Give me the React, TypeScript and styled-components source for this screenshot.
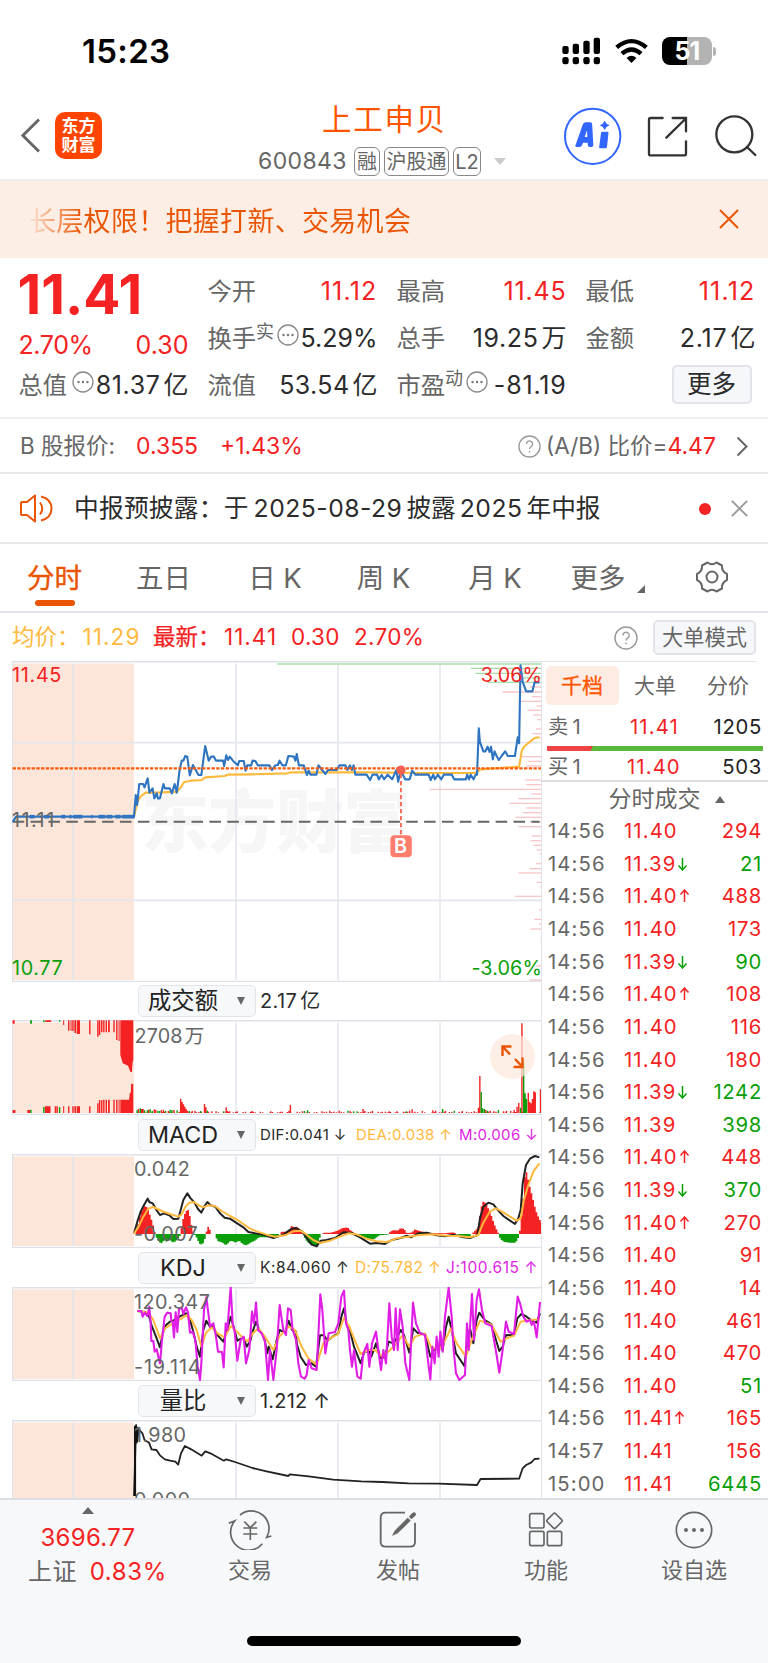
import React from "react";
import styled, { createGlobalStyle, css } from "styled-components";

const RED = "#f42222";
const GREEN = "#0a9f0a";
const ORANGE = "#ea5504";
const GREY = "#666";
const DARK = "#2b2b2b";
const YELLOW = "#ffb93c";
const MAGENTA = "#e01ee6";
const LINE = "#e3e4ea";

const Global = createGlobalStyle`
  * { box-sizing: border-box; }
  body { margin: 0; background: #fff; }
  svg { display: block; flex: none; }
`;

const Page = styled.div`
  width: 768px;
  height: 1663px;
  overflow: hidden;
  display: flex;
  flex-direction: column;
  background: #fff;
  color: ${DARK};
  font-family: Inter, "Noto Sans CJK SC", sans-serif;
  font-size: 24px;
  line-height: 1;
  white-space: nowrap;
`;

const T = styled.span<{ $c?: string; $s?: number; $ls?: number; $w?: number; $ml?: number }>`
  color: ${(p) => p.$c ?? "inherit"};
  font-size: ${(p) => (p.$s ? `${p.$s}px` : "inherit")};
  letter-spacing: ${(p) => p.$ls ?? 0}px;
  font-weight: ${(p) => p.$w ?? 400};
  margin-left: ${(p) => p.$ml ?? 0}px;
`;

/* ---------- status bar ---------- */
const StatusBar = styled.div`
  height: 90px;
  flex: none;
  display: flex;
  align-items: center;
  padding: 12px 52px 0 82px;
`;
const Clock = styled.div`
  font-size: 33px;
  font-weight: 600;
  color: #000;
  letter-spacing: 0.3px;
  flex: 1;
`;
const StatusIcons = styled.div`
  display: flex;
  align-items: center;
  gap: 14px;
`;
const Battery = styled.div`
  width: 50px;
  height: 28px;
  border-radius: 8px;
  background: linear-gradient(90deg, #000 51%, #b3b3b3 51%);
  color: #fff;
  font-size: 25px;
  font-weight: 700;
  letter-spacing: -1px;
  display: flex;
  align-items: center;
  justify-content: center;
`;
const BatteryWrap = styled.div`
  display: flex;
  align-items: center;
  gap: 1px;
  &::after {
    content: "";
    width: 3px;
    height: 9px;
    border-radius: 0 3px 3px 0;
    background: #b3b3b3;
  }
`;

/* ---------- header ---------- */
const Header = styled.header`
  height: 91px;
  flex: none;
  display: grid;
  grid-template-columns: 258px 306px 204px;
  border-bottom: 2px solid #efefef;
`;
const HeaderLeft = styled.div`
  display: flex;
  align-items: center;
  gap: 15px;
  padding: 2px 0 0 21px;
`;
const Logo = styled.div`
  width: 47px;
  height: 47px;
  border-radius: 10px;
  background: #ff4400;
  color: #fff;
  font-size: 17px;
  font-weight: 700;
  line-height: 18.5px;
  display: flex;
  flex-direction: column;
  align-items: center;
  justify-content: center;
`;
const TitleBlock = styled.div`
  display: flex;
  flex-direction: column;
  padding-top: 13px;
`;
const Title = styled.div`
  font-size: 29.5px;
  line-height: 32px;
  letter-spacing: 1.7px;
  color: #ff5500;
  padding-left: 64px;
`;
const CodeRow = styled.div`
  display: flex;
  align-items: center;
  height: 31px;
  margin-top: 11px;
  gap: 4px;
  color: ${GREY};
`;
const Code = styled.span`
  width: 92px;
  font-size: 23px;
  letter-spacing: 0.4px;
`;
const Tag = styled.span<{ $w: number }>`
  width: ${(p) => p.$w}px;
  height: 29px;
  border: 1.2px solid #888;
  border-radius: 6px;
  display: flex;
  align-items: center;
  justify-content: center;
  font-size: 20px;
`;
const Triangle = styled.i<{ $w: number; $h: number; $c: string; $up?: boolean; $ml?: number }>`
  width: 0;
  height: 0;
  margin-left: ${(p) => p.$ml ?? 0}px;
  border-left: ${(p) => p.$w / 2}px solid transparent;
  border-right: ${(p) => p.$w / 2}px solid transparent;
  ${(p) =>
    p.$up
      ? css`border-bottom: ${p.$h}px solid ${p.$c};`
      : css`border-top: ${p.$h}px solid ${p.$c};`}
`;
const HeaderRight = styled.div`
  display: flex;
  align-items: center;
  padding-top: 5px;
`;

/* ---------- banner ---------- */
const Banner = styled.div`
  height: 77px;
  flex: none;
  background: #fdeee5;
  display: flex;
  align-items: center;
  justify-content: space-between;
  padding: 4px 29px 0 29px;
  font-size: 27px;
  letter-spacing: 0.3px;
  svg {
    margin-bottom: 6px;
  }
`;
const BannerText = styled.span`
  color: transparent;
  background: linear-gradient(90deg, rgba(234, 85, 4, 0.05) 0, ${ORANGE} 52px);
  background-clip: text;
  line-height: 40px;
`;

/* ---------- quote ---------- */
const Quote = styled.section`
  height: 161px;
  flex: none;
  display: grid;
  grid-template-columns: repeat(4, 170px);
  column-gap: 19px;
  padding: 0 0 0 18.5px;
  border-bottom: 2px solid #efefef;
`;
const QuoteCol = styled.div`
  display: flex;
  flex-direction: column;
  padding-top: 10px;
`;
const QuoteRow = styled.div<{ $c?: string; $h?: number }>`
  height: ${(p) => p.$h ?? 47}px;
  display: flex;
  align-items: center;
  justify-content: space-between;
  color: ${(p) => p.$c ?? DARK};
  font-size: 25px;
`;
const Label = styled.span`
  color: ${GREY};
  font-size: 24.3px;
  display: inline-flex;
  align-items: center;
`;
const Sup = styled.sup`
  font-size: 18px;
  line-height: 18px;
  margin-bottom: 14px;
  vertical-align: baseline;
`;
const BigPrice = styled.div`
  height: 66px;
  padding-top: 0;
  margin-left: -1px;
  font-size: 55px;
  line-height: 53px;
  font-weight: 700;
  letter-spacing: 0;
  color: ${RED};
`;
const MoreButton = styled.button`
  margin: 0 4px 3px auto;
  width: 80px;
  height: 39px;
  border: 2px solid #e2e4ea;
  border-radius: 5px;
  background: #f6f7fa;
  color: ${DARK};
  font: inherit;
  font-size: 24.5px;
  padding: 0;
`;

/* ---------- information rows ---------- */
const InfoRow = styled.div<{ $h: number }>`
  height: ${(p) => p.$h}px;
  flex: none;
  display: flex;
  align-items: center;
  padding: 1px 20px 0 20px;
  border-bottom: 2px solid #e9e9ec;
`;
const Spacer = styled.div`
  flex: 1;
`;
const Dot = styled.i`
  width: 12px;
  height: 12px;
  border-radius: 50%;
  background: ${RED};
  margin-right: 20px;
`;

/* ---------- period tabs ---------- */
const Tabs = styled.nav`
  height: 69px;
  flex: none;
  display: flex;
  border-bottom: 2px solid ${LINE};
  & > svg {
    margin: 16px 0 0 35px;
  }
`;
const Tab = styled.div<{ $w: number; $active?: boolean }>`
  width: ${(p) => p.$w}px;
  display: flex;
  flex-direction: column;
  align-items: center;
  justify-content: space-between;
  padding: 18px 0 5px;
  font-size: 27.5px;
  line-height: 32px;
  color: ${(p) => (p.$active ? ORANGE : GREY)};
  -webkit-text-stroke: ${(p) => (p.$active ? 0.4 : 0)}px ${ORANGE};
  &::after {
    content: "";
    width: 40px;
    height: 6px;
    border-radius: 3px;
    background: ${(p) => (p.$active ? ORANGE : "transparent")};
  }
`;
const TabMore = styled.span`
  display: flex;
  align-items: flex-end;
  gap: 11px;
  &::after {
    content: "";
    border-left: 8px solid transparent;
    border-bottom: 8px solid ${GREY};
    margin-bottom: 1px;
  }
`;

const AvgRow = styled.div`
  height: 48px;
  flex: none;
  display: flex;
  align-items: center;
  padding: 1px 12px 0 12px;
  font-size: 22.5px;
  color: ${RED};
`;
const Cell = styled.span<{ $w: number; $c?: string; $ls?: number; $s?: number; $bold?: boolean }>`
  width: ${(p) => p.$w}px;
  color: ${(p) => p.$c ?? "inherit"};
  letter-spacing: ${(p) => p.$ls ?? 0}px;
  ${(p) => p.$s && `font-size: ${p.$s}px;`}
  ${(p) => p.$bold && `-webkit-text-stroke: 0.25px ${RED};`}
`;
const ModeButton = styled.button`
  width: 103px;
  height: 35px;
  margin-left: 15px;
  border: 2px solid #e2e4ea;
  border-radius: 5px;
  background: #f6f7fa;
  color: ${GREY};
  font: inherit;
  font-size: 21.2px;
  padding: 0;
`;

/* ---------- charts + order book ---------- */
const Body = styled.main`
  flex: none;
  height: 837px;
  display: grid;
  grid-template-columns: 542px 226px;
  overflow: hidden;
`;
const Charts = styled.div`
  padding-left: 12px;
`;
const Panel = styled.div<{ $h: number }>`
  position: relative;
  height: ${(p) => p.$h}px;
  overflow: hidden;
  border-right: 1.5px solid ${LINE};
`;
const ChartLabel = styled.span<{ $top: number; $left?: number; $right?: number; $c?: string; $ls?: number }>`
  position: absolute;
  top: ${(p) => p.$top}px;
  ${(p) => (p.$right !== undefined ? `right: ${p.$right}px;` : `left: ${p.$left ?? 0}px;`)}
  color: ${(p) => p.$c ?? GREY};
  font-size: 19.8px;
  line-height: 20px;
  letter-spacing: ${(p) => p.$ls ?? 0.35}px;
`;
const IndicatorRow = styled.div<{ $h: number }>`
  height: ${(p) => p.$h}px;
  display: flex;
  align-items: center;
  padding-left: 126px;
  border-right: 1.5px solid ${LINE};
`;
const Select = styled.div`
  width: 118px;
  height: 32px;
  flex: none;
  display: flex;
  align-items: center;
  justify-content: space-between;
  padding: 0 10px 0 0;
  border: 1.5px solid #e2e4ea;
  border-radius: 5px;
  background: #f7f8fa;
  font-size: 23.3px;
  color: #222;
  margin-right: 4px;
`;
const SelectText = styled.span`
  width: 88px;
  text-align: center;
`;
const ExpandButton = styled.button`
  position: absolute;
  left: 478px;
  top: 14px;
  width: 45px;
  height: 45px;
  padding: 0;
  border: 0;
  border-radius: 50%;
  background: rgba(253, 232, 220, 0.7);
`;
const Book = styled.aside`
  display: flex;
  flex-direction: column;
`;
const BookTabs = styled.div`
  height: 47px;
  flex: none;
  display: flex;
  border-top: 1.5px solid ${LINE};
  margin-right: 12px;
  padding: 4px 0 0 3.5px;
`;
const BookTab = styled.div<{ $active?: boolean }>`
  width: 73px;
  height: 39px;
  flex: none;
  border-radius: 5px;
  display: flex;
  align-items: center;
  justify-content: center;
  font-size: 21px;
  background: ${(p) => (p.$active ? "#fdece3" : "transparent")};
  color: ${(p) => (p.$active ? "#ff5500" : GREY)};
  -webkit-text-stroke: ${(p) => (p.$active ? 0.3 : 0)}px #ff5500;
`;
const Row = styled.div<{ $h: number; $pt?: number }>`
  height: ${(p) => p.$h}px;
  flex: none;
  display: grid;
  grid-template-columns: 76px 70px 1fr;
  align-items: center;
  padding: ${(p) => p.$pt ?? 0}px 6px 0 6px;
  font-size: 20.3px;
  letter-spacing: 1.1px;
  color: ${GREY};
`;
const Num = styled.span<{ $c?: string }>`
  text-align: right;
  letter-spacing: 0.7px;
  color: ${(p) => p.$c ?? "#222"};
`;
const Price = styled.span`
  color: ${RED};
`;
const Arrow = styled.span<{ $c: string }>`
  display: inline-block;
  margin-left: 1px;
  color: ${(p) => p.$c};
`;
const RatioBar = styled.div`
  height: 5px;
  flex: none;
  margin: 0 5px 0 5px;
  background: linear-gradient(115deg, #ef4444 21%, #58b93c 21%);
`;
const TradesHead = styled.div`
  height: 35px;
  flex: none;
  display: flex;
  align-items: center;
  justify-content: center;
  gap: 14px;
  border-top: 2px solid #dcdde4;
  font-size: 23px;
  color: ${GREY};
  padding: 2px 0 0 23px;
`;

/* ---------- bottom bar ---------- */
const Bottom = styled.footer`
  flex: 1;
  background: #f7f8fa;
  border-top: 2px solid #dedfe4;
  display: flex;
  flex-direction: column;
  align-items: center;
  color: ${GREY};
`;
const Nav = styled.div`
  width: 768px;
  height: 136px;
  display: grid;
  grid-template-columns: 176px repeat(4, 148px);
`;
const IndexBox = styled.div`
  display: flex;
  flex-direction: column;
  align-items: center;
  padding-top: 7px;
  color: ${RED};
  font-size: 24px;
`;
const IndexValue = styled.div`
  margin-top: 12px;
  letter-spacing: 0.3px;
`;
const IndexChange = styled.div`
  margin: 10px 0 0 19px;
  display: flex;
  gap: 13px;
`;
const NavItem = styled.div`
  display: flex;
  flex-direction: column;
  align-items: center;
  padding-top: 10px;
  font-size: 22px;
  gap: 9px;
`;
const HomeBar = styled.div`
  width: 274px;
  height: 10px;
  border-radius: 5px;
  background: #000;
`;

/* ---------- small drawings ---------- */
const DotsIcon = styled.svg<{ $ml: number }>`
  margin: 0 0 8px ${(p) => p.$ml}px;
`;
const Dots = ({ ml = 2.5 }: { ml?: number }) => (
  <DotsIcon $ml={ml} width="22" height="22" viewBox="0 0 22 22">
    <circle cx="11" cy="11" r="10" fill="none" stroke="#888" strokeWidth="1.3" />
    {[6.5, 11, 15.5].map((x) => (
      <circle key={x} cx={x} cy="11" r="1.2" fill="#777" />
    ))}
  </DotsIcon>
);
const Help = ({ size = 23 }: { size?: number }) => (
  <svg width={size} height={size} viewBox="0 0 24 24" fill="none" stroke="#999" strokeWidth="1.4">
    <circle cx="12" cy="12" r="11" />
    <path d="M8.8 9.4a3.2 3.2 0 1 1 4.8 2.8c-1.1.7-1.6 1.2-1.6 2.4" />
    <path d="M12 16.6v1.7" />
  </svg>
);
const Cross = ({ size, color, w }: { size: number; color: string; w: number }) => (
  <svg width={size} height={size} viewBox="0 0 20 20" stroke={color} strokeWidth={w}>
    <path d="M1 1 19 19M19 1 1 19" />
  </svg>
);
const Value = ({ n, unit, ls = 0.5 }: { n: string; unit?: string; ls?: number }) => (
  <span>
    <T $ls={ls}>{n}</T>
    {unit && <T $ml={3}>{unit}</T>}
  </span>
);

/* ---------- chart data ---------- */
const PRICE =
  "36,516 46,500 382,500 387,435 391,465 397,402 408,402 412,412 421,385 426,428 435,415 440,445 447,430 450,445 456,445 466,402 470,415 484,415 490,430 498,402 504,428 512,360 518,332 523,332 528,318 534,320 541,376 550,345 566,375 574,375 585,288 595,332 602,320 610,320 616,332 636,332 639,348 645,316 650,330 655,320 664,332 678,346 682,333 695,333 700,362 705,346 716,346 720,332 728,333 735,346 768,346 775,360 785,346 792,345 797,332 805,346 815,346 822,318 838,320 842,332 846,312 852,346 866,346 875,375 880,362 885,374 902,374 908,346 918,360 928,372 935,360 960,360 968,346 985,346 990,360 998,346 1003,360 1008,346 1013,374 1045,374 1055,390 1062,374 1075,374 1080,388 1088,375 1095,388 1105,374 1118,388 1130,360 1135,395 1143,362 1155,388 1168,388 1175,362 1184,374 1222,374 1228,390 1235,374 1240,388 1248,374 1258,388 1265,374 1288,374 1295,388 1328,388 1332,374 1337,388 1342,374 1350,388 1356,374 1360,374 1365,235 1368,275 1378,304 1384,304 1390,290 1396,306 1400,290 1405,328 1410,304 1416,318 1422,330 1430,318 1440,304 1448,318 1468,318 1476,262 1480,280 1484,46 1490,95 1500,124 1518,124 1524,97 1538,97";
const AVG =
  "382,500 392,455 402,438 415,428 450,428 505,425 515,412 525,396 545,392 575,390 585,382 640,378 650,374 720,373 820,370 830,367 1060,367 1200,369 1355,369 1370,358 1480,350 1488,300 1496,288 1515,272 1524,264 1538,262";
const ASKS = [[42, 790], [55, 1342], [70, 1355], [84, 1480], [97, 1390]];
const BIDS = [
  [111, 1510], [126, 1433], [140, 1516], [154, 1478], [168, 1530], [181, 1504], [195, 1520], [209, 1532], [237, 1528],
  [251, 1518], [265, 1540], [320, 1485], [334, 1505], [348, 1500], [390, 1498], [404, 1500], [418, 1225], [432, 1515],
  [446, 1478], [460, 1452], [474, 1500], [488, 1490], [502, 1470], [516, 1510], [530, 1478], [558, 1516], [572, 1512],
  [586, 1520], [600, 1530], [612, 1539], [641, 1528], [656, 1510], [669, 1478], [683, 1540], [697, 1530], [711, 1540],
  [739, 1468], [780, 1538], [808, 1523], [822, 1538], [837, 1512], [865, 1541], [878, 1541], [948, 1527], [990, 1510],
];
const OPEN_TICKS = [[85, 98], [126, 140], [175, 186], [198, 204], [209, 235], [260, 264], [281, 300], [304, 320], [329, 344], [348, 384]];

const DIF =
  "12,250 22,215 32,185 42,165 53,146 58,156 68,160 78,178 90,195 102,190 118,196 130,207 145,206 152,180 160,150 172,130 182,145 193,157 204,177 214,188 224,168 232,156 242,166 256,170 270,190 284,203 300,206 318,218 340,232 355,246 375,250 400,254 430,264 460,254 482,238 498,234 516,244 530,264 545,284 560,289 572,272 590,270 615,264 640,247 665,249 690,262 720,281 740,279 765,282 785,270 812,264 830,257 843,262 865,250 890,248 920,256 945,259 970,254 1000,262 1020,264 1042,255 1050,205 1060,170 1075,158 1090,163 1105,182 1120,198 1140,212 1155,222 1165,205 1172,180 1178,100 1188,45 1200,26 1215,18 1228,22";
const DEA =
  "12,250 25,232 40,200 55,176 70,171 95,183 120,192 145,200 155,193 165,172 178,158 192,156 205,165 218,172 235,166 255,168 275,183 300,198 320,208 340,222 360,236 380,244 410,254 435,260 465,256 490,244 512,242 530,254 550,270 570,279 600,272 630,260 655,250 680,253 710,266 740,274 770,276 800,265 835,260 870,255 910,253 950,257 985,258 1020,262 1045,255 1060,218 1080,184 1098,175 1115,184 1140,200 1160,212 1172,205 1182,150 1195,105 1210,65 1228,40";
const HIST: number[][] = [
  [12, 0], [20, -20], [30, -65], [40, -84], [50, -80], [58, -55], [66, -30], [72, -5], [76, 10], [90, 30], [100, 18],
  [108, 24], [115, 16], [125, 25], [135, 22], [145, 10], [150, 0], [152, -20], [158, -50], [165, -68], [172, -72],
  [178, -50], [184, -15], [190, 0], [196, 8], [205, 28], [215, 33], [222, 15], [226, 0], [228, -15], [233, -23],
  [238, -10], [242, 0], [252, 0], [254, 8], [262, 22], [275, 26], [285, 34], [300, 20], [315, 26], [325, 20], [335, 30],
  [347, 34], [360, 26], [372, 20], [385, 10], [410, 10], [440, 6], [448, 0], [450, -6], [475, -8], [482, -24],
  [490, -20], [500, -22], [508, -10], [518, 0], [520, 8], [530, 25], [545, 34], [560, 35], [568, 8], [572, 0],
  [580, -4], [600, -4], [620, -10], [635, -18], [650, -20], [660, -10], [675, 0], [685, 8], [710, 16], [730, 16],
  [745, 4], [770, 2], [775, 0], [778, -8], [790, -12], [800, -10], [810, -18], [820, -15], [828, -2], [845, -5],
  [850, -14], [870, -8], [900, -3], [940, -2], [965, -5], [980, 0], [985, 6], [1015, 8], [1022, 0], [1035, -12],
  [1042, -20], [1048, -60], [1054, -95], [1060, -98], [1070, -82], [1080, -60], [1090, -30], [1098, -12], [1104, 0],
  [1108, 15], [1120, 24], [1135, 26], [1155, 26], [1162, 12], [1165, 0], [1167, -10], [1175, -80], [1182, -170],
  [1187, -185], [1195, -150], [1205, -110], [1215, -70], [1225, -45], [1236, -28],
];
const histPath = (sign: number) => {
  let d = "";
  for (let x = 12; x < 1236; x += 5) {
    const i = Math.max(1, HIST.findIndex((p) => p[0] >= x));
    const [x0, y0] = HIST[i - 1];
    const [x1, y1] = HIST[i];
    const h = y0 + ((y1 - y0) * (x - x0)) / (x1 - x0 || 1);
    if (h * sign > 1) d += `M${x} 252v${h.toFixed(1)}h5v${(-h).toFixed(1)}z`;
  }
  return d;
};
const J =
  "22,483 34,483 38,500 44,488 52,498 58,470 62,520 64,573 70,573 74,605 80,598 86,625 90,640 96,570 104,500 112,488 122,490 124,512 128,514 132,562 137,487 142,546 147,475 156,475 160,492 168,472 174,487 180,548 188,545 196,570 203,650 210,690 214,640 222,480 229,442 240,530 250,520 258,560 264,605 276,606 281,652 287,520 292,540 302,412 308,520 314,545 322,632 332,570 341,560 348,640 358,600 366,485 372,520 378,458 384,540 395,550 405,575 414,690 420,600 430,690 440,600 449,465 460,540 468,555 474,475 482,480 488,540 498,570 505,640 513,680 524,686 530,675 536,630 545,655 560,660 571,433 577,480 586,610 596,550 615,546 625,520 634,440 642,422 648,520 655,540 660,600 666,650 672,600 682,680 692,686 700,610 712,582 718,650 726,580 738,545 745,600 753,660 760,600 768,640 778,460 785,560 792,600 797,475 803,600 810,478 818,530 826,640 838,690 849,458 858,520 870,550 885,555 895,640 901,688 907,590 914,640 920,560 926,620 931,545 938,605 945,500 956,412 965,500 971,600 978,670 988,690 1005,675 1011,520 1016,600 1026,432 1032,570 1040,450 1047,418 1056,480 1066,520 1085,528 1092,570 1099,610 1108,668 1118,600 1128,515 1136,545 1152,552 1163,440 1170,460 1180,500 1190,515 1200,510 1205,525 1212,515 1220,562 1230,456";
const K =
  "22,483 45,486 56,495 66,530 78,560 90,592 98,550 108,525 120,515 130,512 148,500 168,490 180,510 190,545 200,590 210,620 220,540 229,512 240,530 250,532 262,555 280,575 290,545 302,500 312,535 322,572 340,562 350,590 360,575 368,545 378,515 388,540 402,560 412,610 416,590 428,628 440,570 449,540 465,548 476,512 486,540 498,545 500,580 512,620 528,645 545,640 558,650 570,556 582,556 592,572 615,555 625,550 634,500 642,475 650,520 662,550 672,590 692,640 702,608 716,602 724,620 738,580 752,625 765,620 776,575 790,580 800,565 812,540 822,555 838,608 850,535 862,548 885,553 901,620 912,600 930,585 938,600 948,530 956,500 965,540 978,610 1003,648 1014,560 1020,535 1030,580 1040,510 1048,488 1064,510 1084,522 1095,560 1108,603 1118,590 1128,555 1152,556 1162,505 1174,492 1190,500 1205,512 1220,518 1230,490";
const D =
  "22,483 55,488 70,510 90,565 105,535 125,522 150,508 170,495 185,510 200,540 214,590 228,548 245,532 265,552 284,562 302,528 318,542 335,560 352,574 370,548 385,535 405,560 430,600 448,560 476,530 495,540 515,590 535,625 560,644 580,580 600,565 624,552 642,503 658,530 672,565 692,612 715,600 735,600 755,618 775,605 800,580 818,555 838,590 855,560 885,550 905,595 930,595 945,572 962,535 980,580 1008,620 1025,570 1050,512 1085,524 1112,575 1130,565 1152,557 1172,515 1200,510 1230,508";
const RATIO =
  "382,768 388,555 390,608 396,568 406,580 412,600 425,608 432,628 446,630 456,646 470,658 485,662 500,665 508,674 516,640 527,618 545,628 575,647 585,634 600,640 638,662 645,658 670,666 720,684 760,694 822,708 826,703 880,709 950,719 1030,724 1090,726 1165,730 1250,731 1360,735 1370,717 1480,716 1490,685 1500,675 1515,667 1524,657 1538,656";

/* opening auction bars: x, width, end of the upper bar, start of the lower bar */
const AUCTION: number[][] = [
  [36, 6, 146, 405], [180, 3, 150, 394], [194, 4, 167, 394], [201, 3, 167, 414], [206, 4, 168, 394], [212, 5, 174, 394],
  [219, 9, 177, 394], [254, 4, 178, 394], [277, 4, 185, 385], [282, 4, 180, 375], [288, 4, 172, 376], [294, 4, 172, 374],
  [301, 4, 172, 374], [308, 5, 172, 374], [323, 4, 172, 374], [331, 4, 195, 374], [338, 3, 198, 374],
];
const VOL_RED: number[][] = [
  [42, 405], [80, 405], [84, 405], [130, 394], [134, 394], [138, 394], [142, 394], [158, 394], [163, 394], [395, 402],
  [404, 402], [408, 402], [424, 404], [440, 403], [444, 405], [460, 405], [466, 404], [480, 408], [496, 405], [515, 371],
  [519, 381], [523, 388], [527, 395], [531, 403], [535, 407], [548, 408], [556, 407], [583, 387], [587, 397], [604, 409],
  [616, 409], [645, 397], [649, 408], [655, 409], [676, 409], [718, 408], [722, 410], [772, 409], [800, 410], [824, 407],
  [828, 390], [862, 409], [918, 409], [940, 407], [967, 407], [998, 408], [1035, 402], [1040, 408], [1062, 408],
  [1090, 410], [1110, 409], [1132, 409], [1150, 410], [1168, 407], [1175, 403], [1204, 408], [1234, 406], [1242, 407],
  [1270, 408], [1318, 408], [1352, 409], [1364, 398], [1368, 303], [1385, 405], [1398, 407], [1408, 409], [1436, 409],
  [1444, 407], [1456, 408], [1466, 405], [1474, 395], [1479, 384], [1488, 145], [1506, 353], [1510, 380], [1514, 385],
  [1518, 372], [1522, 349], [1526, 352], [1541, 343],
];
const VOL_GREEN: number[][] = [
  [88, 404], [125, 396], [170, 397], [391, 405], [400, 400], [412, 406], [420, 406], [428, 403], [434, 407], [450, 407],
  [455, 408], [472, 408], [485, 404], [490, 405], [505, 406], [540, 408], [572, 408], [591, 407], [638, 409], [868, 408],
  [877, 406], [992, 407], [1008, 409], [1018, 409], [1158, 409], [1262, 402], [1295, 407], [1372, 351], [1376, 400],
  [1381, 402], [1390, 407], [1421, 405], [1484, 398], [1493, 262], [1497, 355], [1501, 372],
];
const bars = (list: number[][]) => list.map(([x, y]) => `M${x - 2} 414V${y}h4V414z`).join("");
const baseline = () => {
  let d = "";
  for (let x = 390; x < 1540; x += 7) if ((x * 31) % 11 < 7) d += `M${x} 414v-${2 + ((x * 13) % 3)}h4V414z`;
  return d;
};

type PlotProps = {
  h: number;
  box: [number, number, number, number];
  backdrop?: React.ReactNode;
  children: React.ReactNode;
};

/* Shared frame: opening auction shade, vertical grid lines and borders */
const Plot = ({ h, box, backdrop, children }: PlotProps) => (
  <svg width="530" height={h} viewBox={`0 0 530 ${h}`}>
    {backdrop}
    <rect x="0.5" y="2.5" width="121.5" height={h - 4.5} fill="#fce6da" />
    {[61, 224, 326, 428].map((x) => (
      <path key={x} d={`M${x} 2.5V${h - 2}`} stroke="#e1e4ea" strokeWidth="1.5" />
    ))}
    <path d="M0 .8H530" stroke="#dfe1e8" strokeWidth="1.6" />
    <path d={`M.5 0V${h}M0 ${h - 0.7}H530`} stroke="#dfe1e8" strokeWidth="1.2" fill="none" />
    <svg width="530" height={h} viewBox={box.join(" ")} preserveAspectRatio="none">
      {children}
    </svg>
  </svg>
);
const Line = ({ p, c, w = 2 }: { p: string; c: string; w?: number }) => (
  <polyline points={p} fill="none" stroke={c} strokeWidth={w} vectorEffect="non-scaling-stroke" strokeLinejoin="round" />
);

const Indicator = ({ name, h, children }: { name: string; h: number; children: React.ReactNode }) => (
  <IndicatorRow $h={h}>
    <Select>
      <SelectText>{name}</SelectText>
      <Triangle $w={9} $h={8} $c={GREY} />
    </Select>
    {children}
  </IndicatorRow>
);

const TRADES: [string, string, string, number, string][] = [
  ["14:56", "11.40", "", 294, RED],
  ["14:56", "11.39", "↓", 21, GREEN],
  ["14:56", "11.40", "↑", 488, RED],
  ["14:56", "11.40", "", 173, RED],
  ["14:56", "11.39", "↓", 90, GREEN],
  ["14:56", "11.40", "↑", 108, RED],
  ["14:56", "11.40", "", 116, RED],
  ["14:56", "11.40", "", 180, RED],
  ["14:56", "11.39", "↓", 1242, GREEN],
  ["14:56", "11.39", "", 398, GREEN],
  ["14:56", "11.40", "↑", 448, RED],
  ["14:56", "11.39", "↓", 370, GREEN],
  ["14:56", "11.40", "↑", 270, RED],
  ["14:56", "11.40", "", 91, RED],
  ["14:56", "11.40", "", 14, RED],
  ["14:56", "11.40", "", 461, RED],
  ["14:56", "11.40", "", 470, RED],
  ["14:56", "11.40", "", 51, GREEN],
  ["14:56", "11.41", "↑", 165, RED],
  ["14:57", "11.41", "", 156, RED],
  ["15:00", "11.41", "", 6445, GREEN],
];

export default function App() {
  return (
    <Page>
      <Global />
      <StatusBar>
        <Clock>15:23</Clock>
        <StatusIcons>
          <svg width="39" height="28" viewBox="65 52 117 82" fill="#000">
            {[[66, 78], [97, 71], [129, 62], [160, 53]].map(([x, y]) => (
              <g key={x}>
                <rect x={x} y={y} width="19" height={102 - y} rx="6" />
                <rect x={x} y="111" width="19" height="22" rx="7" />
              </g>
            ))}
          </svg>
          <svg width="33" height="26" viewBox="223 54 100 78" fill="none" stroke="#000" strokeWidth="13">
            <path d="M228 82q45-38 90 0" />
            <path d="M244 101q29-25 58 0" />
            <path d="M273 129l-15-15q15-13 30 0z" fill="#000" stroke="none" />
          </svg>
          <BatteryWrap>
            <Battery>51</Battery>
          </BatteryWrap>
        </StatusIcons>
      </StatusBar>

      <Header>
        <HeaderLeft>
          <svg width="19" height="35" viewBox="0 0 19 35" fill="none" stroke={GREY} strokeWidth="3">
            <path d="M18 1.5 1.8 17.5 18 33.5" />
          </svg>
          <Logo>
            <span>东方</span>
            <span>财富</span>
          </Logo>
        </HeaderLeft>
        <TitleBlock>
          <Title>上工申贝</Title>
          <CodeRow>
            <Code>600843</Code>
            <Tag $w={26}>融</Tag>
            <Tag $w={65}>沪股通</Tag>
            <Tag $w={28}>L2</Tag>
            <Triangle $w={13} $h={7} $c="#ccc" $ml={9} />
          </CodeRow>
        </TitleBlock>
        <HeaderRight>
          <svg width="204" height="60" viewBox="72 260 612 180" fill="none" strokeLinecap="round">
            <circle cx="158" cy="348" r="83" stroke="#3366ff" strokeWidth="6" />
            <path
              d="M106 376 128 313Q131 306 138 306H150Q156 306 156.5 312L160 374Q160 380 154 380H149Q144 380 143.5 375L143 367H129L126 375Q124 380 119 380H109Q105 380 106 376ZM141 330 134 350H142Z"
              fill="#3366ff"
              fillRule="evenodd"
            />
            <path
              d="M188 334H202Q206 334 205.5 338L201 379Q200 384 195 384H181Q177 384 177.5 380L183 338Q183.5 334 188 334Z"
              fill="#3366ff"
            />
            <path d="M194 301Q198 311 209 315 198 319 194 329 190 319 179 315 190 311 194 301z" fill="#3366ff" />
            <g stroke="#333" strokeWidth="7">
              <path d="M368 293H332Q327 293 327 298V400Q327 405 332 405H432Q438 405 438 400V363" />
              <path d="M398 293H438V333M436 296 379 352" />
              <circle cx="583" cy="342" r="54" />
              <path d="M621 380 646 404" />
            </g>
          </svg>
        </HeaderRight>
      </Header>

      <Banner>
        <BannerText>长层权限！把握打新、交易机会</BannerText>
        <Cross size={20} color={ORANGE} w={2} />
      </Banner>

      <Quote>
        <QuoteCol>
          <BigPrice>11.41</BigPrice>
          <QuoteRow $c={RED} $h={22}>
            <Value n="2.70%" ls={-0.4} />
            <Value n="0.30" ls={0} />
          </QuoteRow>
          <QuoteRow $h={59}>
            <Label>
              总值
              <Dots ml={5} />
            </Label>
            <Value n="81.37" unit="亿" ls={0.6} />
          </QuoteRow>
        </QuoteCol>
        <QuoteCol>
          <QuoteRow $c={RED}>
            <Label>今开</Label>
            <Value n="11.12" ls={1.2} />
          </QuoteRow>
          <QuoteRow>
            <Label>
              换手<Sup>实</Sup>
              <Dots />
            </Label>
            <Value n="5.29%" ls={0} />
          </QuoteRow>
          <QuoteRow>
            <Label>流值</Label>
            <Value n="53.54" unit="亿" ls={0.4} />
          </QuoteRow>
        </QuoteCol>
        <QuoteCol>
          <QuoteRow $c={RED}>
            <Label>最高</Label>
            <Value n="11.45" ls={0.8} />
          </QuoteRow>
          <QuoteRow>
            <Label>总手</Label>
            <Value n="19.25" unit="万" ls={0.6} />
          </QuoteRow>
          <QuoteRow>
            <Label>
              市盈<Sup>动</Sup>
              <Dots />
            </Label>
            <Value n="-81.19" ls={0.8} />
          </QuoteRow>
        </QuoteCol>
        <QuoteCol>
          <QuoteRow $c={RED}>
            <Label>最低</Label>
            <Value n="11.12" ls={1.2} />
          </QuoteRow>
          <QuoteRow>
            <Label>金额</Label>
            <Value n="2.17" unit="亿" ls={0.8} />
          </QuoteRow>
          <QuoteRow>
            <MoreButton>更多</MoreButton>
          </QuoteRow>
        </QuoteCol>
      </Quote>

      <InfoRow $h={55}>
        <Cell $w={116} $c={GREY} $s={22.5}>
          B 股报价:
        </Cell>
        <Cell $w={84} $c={RED} $s={23}>
          0.355
        </Cell>
        <T $s={23} $c={RED}>+1.43%</T>
        <Spacer />
        <Help />
        <T $s={22.5} $c={GREY} $ml={5}>(A/B) 比价=</T>
        <T $s={23} $c={RED}>4.47</T>
        <T $ml={20}>
          <svg width="12" height="21" viewBox="0 0 12 21" fill="none" stroke={GREY} strokeWidth="2">
            <path d="M1.5 1.5 10.5 10.5 1.5 19.5" />
          </svg>
        </T>
      </InfoRow>

      <InfoRow $h={70}>
        <svg width="33" height="29" viewBox="0 0 33 29" fill="none" stroke={ORANGE} strokeWidth="2">
          <path d="M1 9Q1 8 2 8H7L15 1.5V27.5L7 21H2Q1 21 1 20Z" strokeLinejoin="round" />
          <path d="M20 8.5Q24.5 14.5 20 20.5M21 2.5Q31.5 5 31.5 14.5T21 26.5" />
        </svg>
        <T $ml={21} $s={24.7} $ls={0.25}>
          中报预披露：于
          <T $ml={5} $ls={0.5}>2025-08-29</T>
          <T $ml={4}>披露</T>
          <T $ml={4} $ls={0.5}>2025</T>
          <T $ml={4}>年中报</T>
        </T>
        <Spacer />
        <Dot />
        <Cross size={17} color="#999" w={2.2} />
      </InfoRow>

      <Tabs>
        <Tab $w={109} $active>分时</Tab>
        <Tab $w={109}>五日</Tab>
        <Tab $w={114}>日 K</Tab>
        <Tab $w={103}>周 K</Tab>
        <Tab $w={120}>月 K</Tab>
        <Tab $w={105}>
          <TabMore>更多</TabMore>
        </Tab>
        <svg width="34" height="34" viewBox="-17 -17 34 34" fill="none" stroke={GREY} strokeWidth="2">
          <path
            d="M-4.5-14.5Q0-11 4.5-14.5L10-11.5Q9.5-5.5 15-3V3Q9.5 5.5 10 11.5L4.5 14.5Q0 11-4.5 14.5L-10 11.5Q-9.5 5.5-15 3V-3Q-9.5-5.5-10-11.5Z"
            strokeLinejoin="round"
          />
          <circle r="5.5" />
        </svg>
      </Tabs>

      <AvgRow>
        <Cell $w={70.5} $c={YELLOW}>均价：</Cell>
        <Cell $w={70.5} $c={YELLOW} $ls={1.1}>11.29</Cell>
        <Cell $w={71} $bold>最新：</Cell>
        <Cell $w={67} $ls={1}>11.41</Cell>
        <Cell $w={63} $ls={0.3}>0.30</Cell>
        <Cell $w={72} $ls={0.3}>2.70%</Cell>
        <Spacer />
        <Help size={24} />
        <ModeButton>大单模式</ModeButton>
      </AvgRow>

      <Body>
        <Charts>
          <Panel $h={321}>
            <Plot
              h={321}
              box={[34.2, 33, 1511, 963]}
              backdrop={
                <text x="129" y="186" fontSize="68" fontWeight="900" fill="#f6f6f6" textLength="270">
                  东方财富
                </text>
              }
            >
              <path d="M36 278H1544M36 751H1544" stroke="#e3e6ec" strokeWidth="1.6" vectorEffect="non-scaling-stroke" />
              {ASKS.map(([y, x]) => (
                <path key={y} d={`M${x} ${y}H1544`} stroke="#a8dfa8" strokeWidth="4" />
              ))}
              {BIDS.map(([y, x]) => (
                <path key={y} d={`M${x} ${y}H1544`} stroke="#f9c6c8" strokeWidth="4" />
              ))}
              <path d="M36 515H1538" stroke="#666" strokeWidth="6" strokeDasharray="33 18" />
              <Line p={AVG} c={YELLOW} w={2.1} />
              <Line p={PRICE} c="#2f74c0" w={2.1} />
              {OPEN_TICKS.map(([a, b]) => (
                <path key={a} d={`M${a} 500H${b}`} stroke="#2f74c0" strokeWidth="11" />
              ))}
              <path d="M36 355H1544" stroke="#ff5a0a" strokeWidth="6.5" strokeDasharray="9.5 4" />
              <path d="M1143 372V555" stroke="#fb6a5c" strokeWidth="5.5" strokeDasharray="13 8" />
              <ellipse cx="1143" cy="360" rx="13" ry="13.5" fill="#f4604f" />
              <rect x="1113" y="556" width="61" height="66" rx="12" fill="#ff7d6c" />
            </Plot>
            <ChartLabel $top={4} $c={RED} $ls={0.7}>11.45</ChartLabel>
            <ChartLabel $top={4} $right={-1} $c={RED} $ls={0}>3.06%</ChartLabel>
            <ChartLabel $top={297} $c={GREEN} $ls={0.6}>10.77</ChartLabel>
            <ChartLabel $top={297} $right={-1} $c={GREEN} $ls={0.1}>-3.06%</ChartLabel>
            <ChartLabel $top={149} $left={0} $ls={1.5}>11.11</ChartLabel>
            <ChartLabel $top={175} $left={382} $c="#fff" $ls={0}>
              <T $w={600}>B</T>
            </ChartLabel>
          </Panel>

          <Indicator name="成交额" h={38}>
            <Cell $w={100} $s={20}>
              <Value n="2.17" unit="亿" ls={0.4} />
            </Cell>
          </Indicator>
          <Panel $h={95}>
            <Plot h={95} box={[34.2, 135, 1511, 285]}>
              <path
                fill={RED}
                d={AUCTION.map(([x, w, a, b]) => `M${x} 136V${a}h${w}V136zM${x} 414V${b}h${w}V414z`).join("")}
              />
              <path fill={RED} d="M343 136V240L350 265 365 272 372 291H376L378 262 380 255V136zM129 136h17v5h-17z" />
              <path fill={RED} d="M343 414V374H368L370 355 373 352 374 326H380V414z" />
              <path fill={GREEN} d="M86 136h5v10h-5zM123 136h4v6h-4zM168 136h4v4h-4z" />
              <path fill={RED} d={baseline() + bars(VOL_RED)} />
              <path fill={GREEN} d={bars(VOL_GREEN)} />
            </Plot>
            <ChartLabel $top={6} $left={122.5} $ls={0.1}>
              2708<T $ml={2}>万</T>
            </ChartLabel>
            <ExpandButton>
              <svg width="45" height="45" viewBox="0 0 45 45" fill="none" stroke={ORANGE} strokeWidth="2.4">
                <path d="M12.5 22V12.5H21.5M12.5 12.5 20 20.5" />
                <path d="M32.5 23.5V33H23.5M32.5 33 25 25" />
              </svg>
            </ExpandButton>
          </Panel>

          <Indicator name="MACD" h={39}>
            <Cell $w={96} $s={15} $ls={0.35}>DIF:0.041 ↓</Cell>
            <Cell $w={103} $c={YELLOW} $s={15} $ls={0.35}>DEA:0.038 ↑</Cell>
            <Cell $w={80} $c={MAGENTA} $s={15} $ls={0.35}>M:0.006 ↓</Cell>
          </Indicator>
          <Panel $h={94}>
            <Plot h={94} box={[-354, 12, 1590, 282]}>
              <path fill={RED} d={histPath(-1)} />
              <path fill={GREEN} d={histPath(1)} />
              <Line p={DIF} c="#222" />
              <Line p={DEA} c={YELLOW} />
            </Plot>
            <ChartLabel $top={5} $left={122}>0.042</ChartLabel>
            <ChartLabel $top={70} $left={122}>-0.007</ChartLabel>
          </Panel>

          <Indicator name="KDJ" h={39}>
            <Cell $w={95} $s={15.5} $ls={0.5}>K:84.060 ↑</Cell>
            <Cell $w={91} $c={YELLOW} $s={15.5} $ls={0.4}>D:75.782 ↑</Cell>
            <Cell $w={92} $c={MAGENTA} $s={15.5} $ls={0.6}>J:100.615 ↑</Cell>
          </Indicator>
          <Panel $h={94}>
            <Plot h={94} box={[-354, 411, 1590, 282]}>
              <Line p={K} c="#222" />
              <Line p={D} c={YELLOW} />
              <Line p={J} c={MAGENTA} w={2.1} />
            </Plot>
            <ChartLabel $top={5} $left={122} $ls={0.4}>120.347</ChartLabel>
            <ChartLabel $top={70} $left={122} $ls={0.8}>-19.114</ChartLabel>
          </Panel>

          <Indicator name="量比" h={39}>
            <T $s={20} $ls={0.2}>1.212 ↑</T>
          </Indicator>
          <Panel $h={79}>
            <Plot h={94} box={[34.2, 540, 1511, 282]}>
              <Line p={RATIO} c="#222" w={1.8} />
              <path d="M385 768V557M391 560V605" stroke="#111" strokeWidth="6" />
            </Plot>
            <ChartLabel $top={5} $left={122}>1.980</ChartLabel>
            <ChartLabel $top={70} $left={122}>0.000</ChartLabel>
          </Panel>
        </Charts>

        <Book>
          <BookTabs>
            <BookTab $active>千档</BookTab>
            <BookTab>大单</BookTab>
            <BookTab>分价</BookTab>
          </BookTabs>
          <Row $h={38} $pt={1}>
            <span>卖<T $ml={3}>1</T></span>
            <T $ml={6} $c={RED} $ls={1.1}>11.41</T>
            <Num>1205</Num>
          </Row>
          <RatioBar />
          <Row $h={29} $pt={3}>
            <span>买<T $ml={3}>1</T></span>
            <T $ml={3} $c={RED} $ls={1.1}>11.40</T>
            <Num>503</Num>
          </Row>
          <TradesHead>
            分时成交
            <Triangle $w={10} $h={7} $c={GREY} $up />
          </TradesHead>
          {TRADES.map(([time, price, arrow, vol, color], i) => (
            <Row key={i} $h={32.63}>
              <span>{time}</span>
              <Price>
                {price}
                {arrow && (
                  <Arrow $c={arrow === "↓" ? GREEN : RED}>
                    <svg width="11" height="14" viewBox="0 0 11 14" fill="none" stroke="currentColor" strokeWidth="1.5">
                      <path d={arrow === "↓" ? "M5.5 1V13M1.5 8.5 5.5 13 9.5 8.5" : "M5.5 13V1M1.5 5.5 5.5 1 9.5 5.5"} />
                    </svg>
                  </Arrow>
                )}
              </Price>
              <Num $c={color}>{vol}</Num>
            </Row>
          ))}
        </Book>
      </Body>

      <Bottom>
        <Nav>
          <IndexBox>
            <Triangle $w={13} $h={7} $c={GREY} $up />
            <IndexValue>3696.77</IndexValue>
            <IndexChange>
              <T $c={GREY} $ls={0.3}>上证</T>
              <T $ls={0.6}>0.83%</T>
            </IndexChange>
          </IndexBox>
          <NavItem>
            <svg width="44" height="40" viewBox="26 30 132 120" fill="none" stroke={GREY} strokeWidth="5">
              <path d="M62 45A53 53 0 0 1 142 112L156 108" />
              <path d="M129 131A53 53 0 0 1 46 63L28 70" />
              <path d="M75 65 93 83 111 65M72 84H114M72 102H114M93 83V120" />
            </svg>
            交易
          </NavItem>
          <NavItem>
            <svg width="38" height="40" viewBox="480 30 114 120" fill="none" stroke={GREY} strokeWidth="5.5">
              <path d="M558 38H500Q485 38 485 53V126Q485 140 500 140H574Q588 140 588 126V68" />
              <path d="M521 106 528 92 566 54 574 62 536 99z" fill={GREY} strokeWidth="2" />
              <path d="M577 50 585 43" strokeWidth="12" strokeLinecap="round" />
            </svg>
            发帖
          </NavItem>
          <NavItem>
            <svg width="36" height="40" viewBox="926 30 108 120" fill="none" stroke={GREY} strokeWidth="5">
              <rect x="931" y="41" width="43" height="43" rx="5" />
              <rect x="931" y="94" width="43" height="43" rx="5" />
              <rect x="984" y="94" width="43" height="43" rx="5" />
              <rect x="988" y="45" width="35" height="35" rx="5" transform="rotate(45 1005.5 62.5)" />
            </svg>
            功能
          </NavItem>
          <NavItem>
            <svg width="38" height="40" viewBox="1365 30 114 120" fill="none" stroke={GREY} strokeWidth="5">
              <circle cx="1422" cy="90" r="53" />
              {[1398, 1422, 1446].map((x) => (
                <circle key={x} cx={x} cy="90" r="6" fill={GREY} stroke="none" />
              ))}
            </svg>
            设自选
          </NavItem>
        </Nav>
        <HomeBar />
      </Bottom>
    </Page>
  );
}
